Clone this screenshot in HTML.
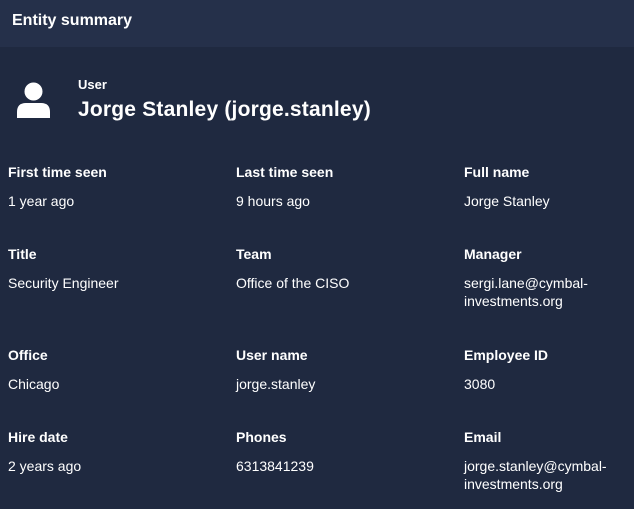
<!DOCTYPE html>
<html><head><style>
body{margin:0;width:634px;height:509px;background:#1f2940;font-family:"Liberation Sans",sans-serif;color:#fff;overflow:hidden;position:relative}
.hd{height:47px;background:#25304a;font-weight:bold;font-size:16px;line-height:41px;padding-left:12px}
.ic{position:absolute;left:17px;top:82px}
.u{position:absolute;left:78px;top:77px;font-size:13px;font-weight:bold}
.n{position:absolute;left:78px;top:98px;font-size:21px;font-weight:bold;letter-spacing:0.2px}
.c{position:absolute;font-size:14px;width:170px}
.c b{display:block;line-height:16px}
.c span{display:block;margin-top:12px;line-height:18px}
</style></head><body>
<div class="hd">Entity summary</div>
<svg class="ic" width="33" height="36" viewBox="0 0 33 36"><circle cx="16.5" cy="9.5" r="9" fill="#fff"/><path d="M0 36 V30 Q0 21 9 21 H24 Q33 21 33 30 V36 Z" fill="#fff"/></svg>
<div class="u">User</div>
<div class="n">Jorge Stanley (jorge.stanley)</div>
<div class="c" style="left:8px;top:164px"><b>First time seen</b><span>1 year ago</span></div>
<div class="c" style="left:236px;top:164px"><b>Last time seen</b><span>9 hours ago</span></div>
<div class="c" style="left:464px;top:164px"><b>Full name</b><span>Jorge Stanley</span></div>
<div class="c" style="left:8px;top:246px"><b>Title</b><span>Security Engineer</span></div>
<div class="c" style="left:236px;top:246px"><b>Team</b><span>Office of the CISO</span></div>
<div class="c" style="left:464px;top:246px"><b>Manager</b><span>sergi.lane@cymbal-<br>investments.org</span></div>
<div class="c" style="left:8px;top:347px"><b>Office</b><span>Chicago</span></div>
<div class="c" style="left:236px;top:347px"><b>User name</b><span>jorge.stanley</span></div>
<div class="c" style="left:464px;top:347px"><b>Employee ID</b><span>3080</span></div>
<div class="c" style="left:8px;top:429px"><b>Hire date</b><span>2 years ago</span></div>
<div class="c" style="left:236px;top:429px"><b>Phones</b><span>6313841239</span></div>
<div class="c" style="left:464px;top:429px"><b>Email</b><span>jorge.stanley@cymbal-<br>investments.org</span></div>
</body></html>
